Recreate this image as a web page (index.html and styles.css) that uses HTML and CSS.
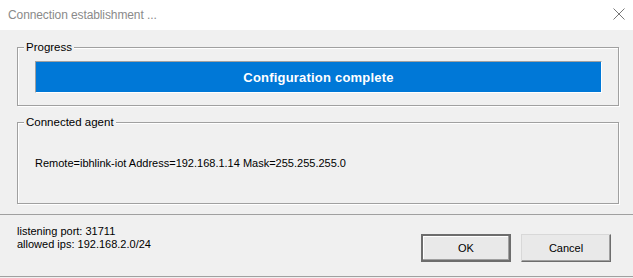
FILE: index.html
```html
<!DOCTYPE html>
<html lang="en">
  <head>
    <meta charset="UTF-8" />
    <meta name="viewport" content="width=device-width, initial-scale=1.0" />
    <link rel="stylesheet" href="styles.css">
  </head>

  <body>
    <div class="window">
      <div class="titlebar">
        <span class="title">Connection establishment ...</span>
        <svg class="close" width="12" height="12" viewBox="0 0 12 12">
          <path d="M0.5 0.5 L11.5 11.5 M11.5 0.5 L0.5 11.5" stroke="#777" stroke-width="1" fill="none" />
        </svg>
      </div>

      <div class="content">
        <!-- Progress box -->
        <div class="group group-progress">
          <span class="group-label">Progress</span>
          <div class="bar">Configuration complete</div>
        </div>

        <!-- Agent box -->
        <div class="group group-agent">
          <span class="group-label">Connected agent</span>
          <div class="agent-info">Remote=ibhlink-iot Address=192.168.1.14 Mask=255.255.255.0</div>
        </div>
      </div>

      <div class="footer">
        <div class="info">
          <div>listening port: 31711</div>
          <div>allowed ips: 192.168.2.0/24</div>
        </div>
        <div class="buttons">
          <button class="btn btn-default">OK</button>
          <button class="btn">Cancel</button>
        </div>
      </div>
    </div>
  </body>
</html>
```

FILE: styles.css
```css
html, body {
  margin: 0;
  padding: 0;
}
body {
  width: 633px;
  height: 278px;
  overflow: hidden;
  background-color: #f0f0f0;
  font-family: "Liberation Sans", Arial, sans-serif;
  font-size: 11px;
  color: #000;
}

.titlebar {
  height: 30px;
  background-color: #fff;
  display: flex;
  align-items: center;
  justify-content: space-between;
  padding: 0 8px 0 8px;
  box-sizing: border-box;
}
.title {
  font-size: 12px;
  letter-spacing: -0.1px;
  color: #8a8a8a;
  margin-top: -1px;
}
.close {
  margin-top: -2px;
}

.content {
  padding: 0 14px 0 17px;
}

.group {
  position: relative;
  border: 1px solid #a0a0a0;
  box-shadow: 1px 1px 0 #fff, inset 1px 1px 0 #fff;
}
.group-label {
  position: absolute;
  top: -8px;
  left: 6px;
  padding: 0 2px 0 2px;
  background-color: #f0f0f0;
  line-height: 14px;
  font-size: 11.5px;
}

.group-progress {
  margin-top: 17px;
  padding: 13px 16px 12px 17px;
}
.bar {
  height: 32px;
  box-sizing: border-box;
  background-color: #0078d7;
  border-top: 1px solid #a0a0a0;
  border-left: 1px solid #a0a0a0;
  border-right: 1px solid #fff;
  border-bottom: 1px solid #fff;
  color: #fff;
  font-weight: bold;
  font-size: 13px;
  letter-spacing: 0.2px;
  display: flex;
  align-items: center;
  justify-content: center;
}

.group-agent {
  margin-top: 16px;
  height: 80px;
  padding-left: 17px;
  display: flex;
  align-items: center;
}

.footer {
  margin-top: 10px;
  height: 63px;
  box-sizing: border-box;
  border-top: 1px solid #a0a0a0;
  border-bottom: 1px solid #a0a0a0;
  display: flex;
  justify-content: space-between;
  padding: 0 22px 0 17px;
}
.info {
  padding-top: 10px;
  line-height: 13px;
}
.buttons {
  display: flex;
  gap: 10px;
  padding-top: 19px;
}
.btn {
  width: 90px;
  height: 28px;
  background-color: #e9e9e9;
  font-family: "Liberation Sans", Arial, sans-serif;
  font-size: 11px;
  color: #000;
  border: 1px solid;
  border-color: #d8d8d8 #6d6d6d #6d6d6d #d8d8d8;
  box-shadow: inset -1px -1px 0 #a0a0a0;
  padding: 0;
}
.btn-default {
  border: 2px solid #6d6d6d;
  box-shadow: inset -1px -1px 0 #a0a0a0, inset 1px 1px 0 #fff;
}
```
